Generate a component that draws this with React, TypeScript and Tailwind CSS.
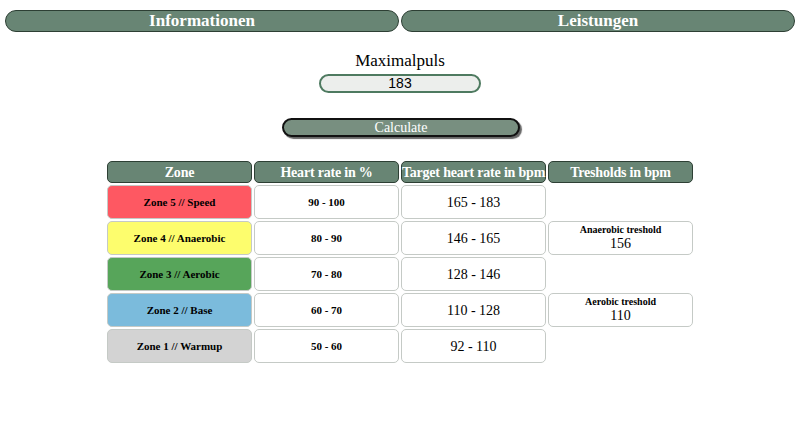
const zones = [
  { name: 'Zone 5 // Speed', color: 'bg-[#fe5862]', pct: '90 - 100', bpm: '165 - 183', tr: null as null | { label: string; value: string } },
  { name: 'Zone 4 // Anaerobic', color: 'bg-[#fdfd6d]', pct: '80 - 90', bpm: '146 - 165', tr: { label: 'Anaerobic treshold', value: '156' } },
  { name: 'Zone 3 // Aerobic', color: 'bg-[#57a55a]', pct: '70 - 80', bpm: '128 - 146', tr: null },
  { name: 'Zone 2 // Base', color: 'bg-[#7bbbdc]', pct: '60 - 70', bpm: '110 - 128', tr: { label: 'Aerobic treshold', value: '110' } },
  { name: 'Zone 1 // Warmup', color: 'bg-[#d3d3d3]', pct: '50 - 60', bpm: '92 - 110', tr: null },
];

const headers = ['Zone', 'Heart rate in %', 'Target heart rate in bpm', 'Tresholds in bpm'];

export default function App() {
  return (
    <div className="h-[440px] w-[800px] bg-white font-['Liberation_Serif',serif] text-black">
      <div className="flex gap-[2px] px-[5px] pt-[10px]">
        <div className="flex h-[22px] flex-1 items-center justify-center rounded-full border border-[#2d3f34] bg-[#688574] text-[17px] font-bold text-white">
          Informationen
        </div>
        <div className="flex h-[22px] flex-1 items-center justify-center rounded-full border border-[#2d3f34] bg-[#688574] text-[17px] font-bold text-white">
          Leistungen
        </div>
      </div>

      <div className="flex flex-col items-center">
        <div className="mt-[19px] text-[17px] leading-[20px]">Maximalpuls</div>
        <div className="mt-[3px] flex h-[19px] w-[162px] items-center justify-center rounded-full border-2 border-[#4e7a60] bg-[#eceeec] font-['Liberation_Sans',sans-serif] text-[14px]">
          183
        </div>
        <button className="mt-[25px] ml-[2px] flex h-[19px] w-[238px] items-center justify-center rounded-full border-2 border-[#111] bg-[#788f80] text-[14px] text-white shadow-[2px_2px_1px_rgba(0,0,0,0.6)]">
          Calculate
        </button>
      </div>

      <div className="mx-auto mt-[24px] grid w-[586px] grid-cols-4 gap-[2px]">
        {headers.map((h) => (
          <div
            key={h}
            className="flex h-[22px] items-center justify-center whitespace-nowrap rounded-[5px] border border-[#2d3f34] bg-[#688574] text-[14px] font-bold tracking-[-0.2px] text-white"
          >
            {h}
          </div>
        ))}
        {zones.map((z) => (
          <div key={z.name} className="contents">
            <div className={`flex h-[34px] items-center justify-center rounded-[5px] border border-[#c5cac6] text-[11px] font-bold ${z.color}`}>
              {z.name}
            </div>
            <div className="flex h-[34px] items-center justify-center rounded-[5px] border border-[#c5cac6] bg-white text-[11px] font-bold">
              {z.pct}
            </div>
            <div className="flex h-[34px] items-center justify-center rounded-[5px] border border-[#c5cac6] bg-white text-[14px]">
              {z.bpm}
            </div>
            {z.tr ? (
              <div className="flex h-[34px] flex-col items-center justify-center rounded-[5px] border border-[#c5cac6] bg-white">
                <span className="text-[10px] leading-[12px] font-bold">{z.tr.label}</span>
                <span className="text-[14px] leading-[16px]">{z.tr.value}</span>
              </div>
            ) : (
              <div className="h-[34px]" />
            )}
          </div>
        ))}
      </div>
    </div>
  );
}
